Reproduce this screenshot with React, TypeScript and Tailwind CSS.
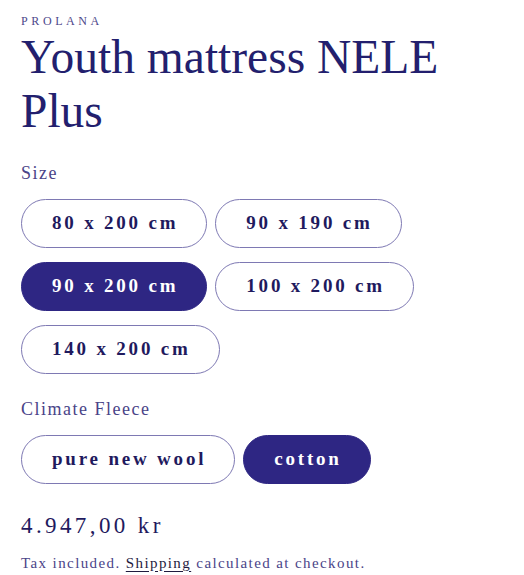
import { useState } from 'react';

const SIZES = ['80 x 200 cm', '90 x 190 cm', '90 x 200 cm', '100 x 200 cm', '140 x 200 cm'];
const FLEECES = ['pure new wool', 'cotton'];

function Pill({ label, active, onClick }: { label: string; active: boolean; onClick: () => void }) {
  return (
    <button
      onClick={onClick}
      className={
        active
          ? 'h-[49px] rounded-full border border-[#2e2683] bg-[#2e2683] pl-[30px] pr-[28px] text-[19px] font-bold tracking-[2.8px] text-white'
          : 'h-[49px] rounded-full border border-[#7e79b3] bg-white pl-[30px] pr-[28px] text-[19px] font-bold tracking-[2.8px] text-[#1f1a5e]'
      }
    >
      {label}
    </button>
  );
}

export default function App() {
  const [size, setSize] = useState('90 x 200 cm');
  const [fleece, setFleece] = useState('cotton');

  return (
    <div className="min-h-screen bg-white px-[21px] pt-[12px] font-['Liberation_Serif',serif] text-[#231f6e]">
      <p className="text-[12px] tracking-[3.6px] text-[#4d478a]">PROLANA</p>
      <h1 className="max-w-[460px] text-[47.5px] leading-[54px] text-[#231f6e]">Youth mattress NELE Plus</h1>

      {/* Size options */}
      <p className="mt-[22px] text-[18px] tracking-[1.5px] text-[#4a4488]">Size</p>
      <div className="mt-[12px] flex max-w-[420px] flex-wrap gap-x-[8px] gap-y-[14px]">
        {SIZES.map((s) => (
          <Pill key={s} label={s} active={s === size} onClick={() => setSize(s)} />
        ))}
      </div>

      {/* Climate fleece options */}
      <p className="mt-[22px] text-[18px] tracking-[1.5px] text-[#4a4488]">Climate Fleece</p>
      <div className="mt-[12px] flex flex-wrap gap-x-[8px] gap-y-[14px]">
        {FLEECES.map((f) => (
          <Pill key={f} label={f} active={f === fleece} onClick={() => setFleece(f)} />
        ))}
      </div>

      <p className="mt-[25px] text-[23px] tracking-[3.4px] text-[#1f1a5e]">4.947,00 kr</p>
      <p className="mt-[8px] text-[15px] tracking-[1.4px] text-[#4a4488]">
        Tax included.{' '}
        <a className="text-[#1f1a3e] underline underline-offset-[3px]">Shipping</a> calculated at checkout.
      </p>
    </div>
  );
}
